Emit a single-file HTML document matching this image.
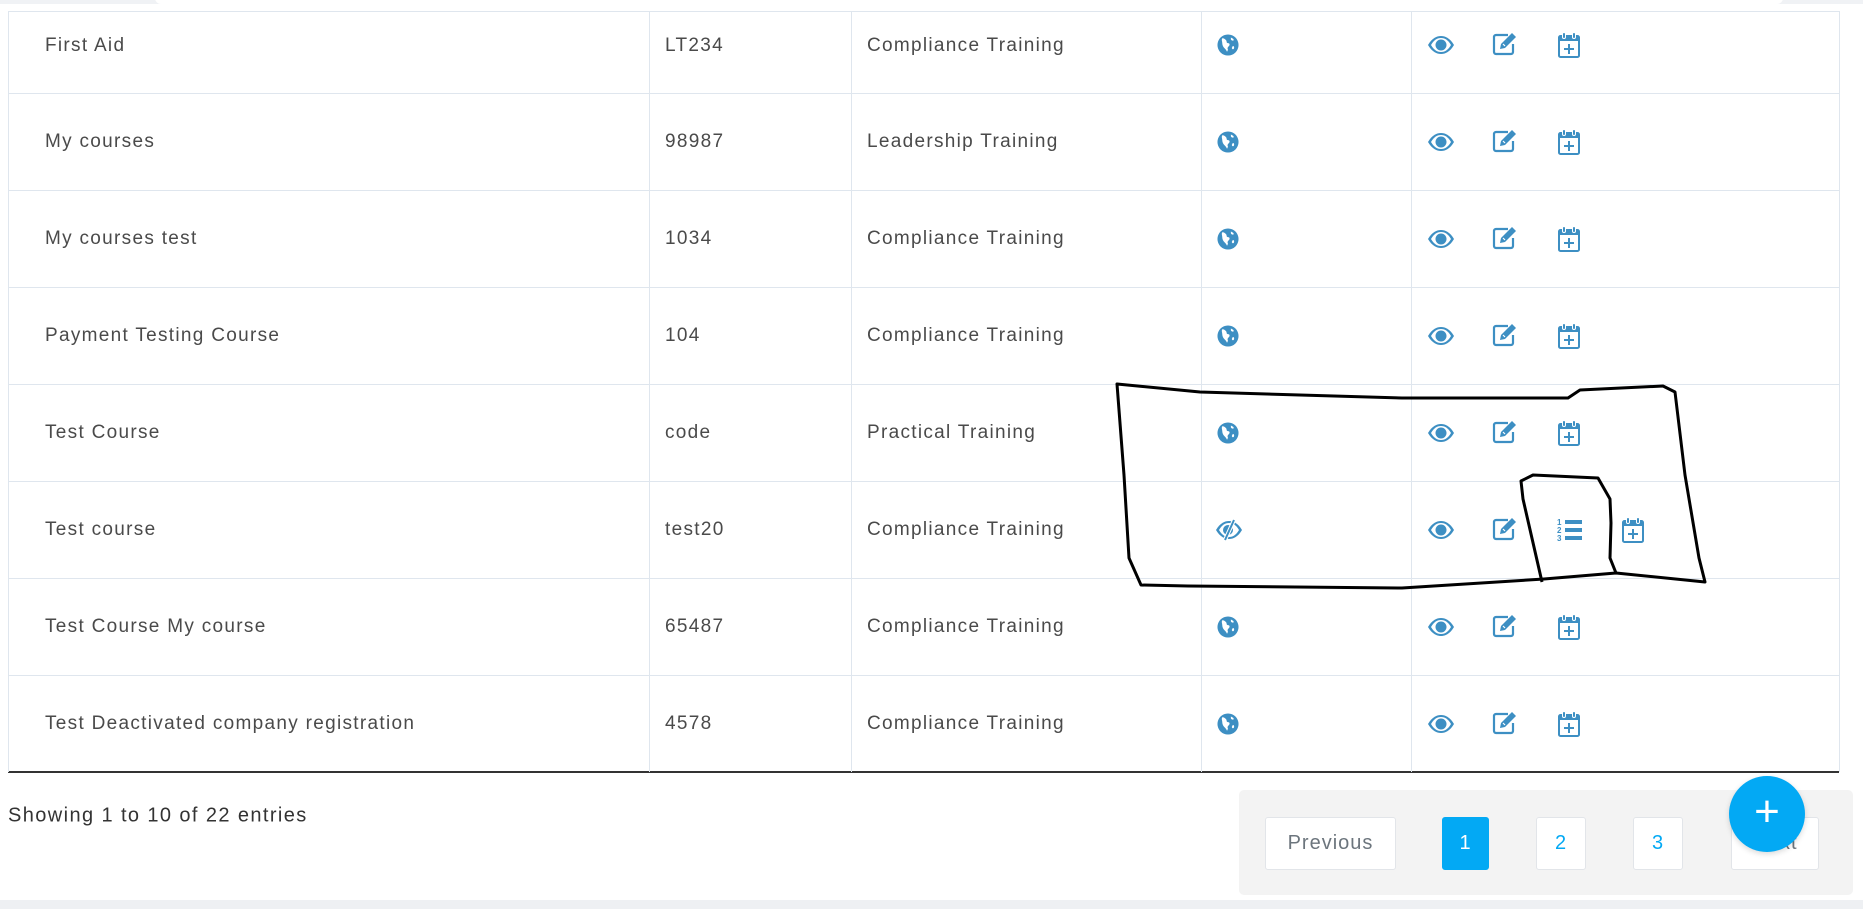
<!DOCTYPE html>
<html><head><meta charset="utf-8"><style>
*{margin:0;padding:0;box-sizing:border-box}
body{width:1863px;height:909px;background:#fff;position:relative;overflow:hidden;font-family:"Liberation Sans",sans-serif;color:#444}
.topband{position:absolute;left:0;top:0;width:1863px;height:4px;background:#f0f2f5}
.topbar{position:absolute;left:155px;top:-8px;width:1628px;height:12px;background:#fff;border-radius:8px}
.t{position:absolute;font-size:19px;color:#4a4a4a;letter-spacing:1.3px;white-space:nowrap;transform:translateY(-50%)}
.hl{position:absolute;left:8px;width:1831px;height:1px;background:#dfe6ee}
.vl{position:absolute;top:11px;height:761px;width:1px;background:#dfe6ee}
.ic{position:absolute;transform:translate(-50%,-50%)}
.pg{position:absolute;left:1239px;top:790px;width:614px;height:105px;background:#f3f3f3;border-radius:5px}
.b{position:absolute;top:817px;height:53px;background:#fff;border:1px solid #e2e5e9;border-radius:3px;font-size:20px;letter-spacing:1px;color:#03a9f4;display:flex;align-items:center;justify-content:center}
</style></head><body>
<div class="topband"></div><div class="topbar"></div>
<div class="hl" style="top:11px"></div>
<div class="hl" style="top:93px"></div>
<div class="hl" style="top:190px"></div>
<div class="hl" style="top:287px"></div>
<div class="hl" style="top:384px"></div>
<div class="hl" style="top:481px"></div>
<div class="hl" style="top:578px"></div>
<div class="hl" style="top:675px"></div>
<div class="hl" style="top:771px;height:2px;background:#333"></div>
<div class="vl" style="left:8px"></div>
<div class="vl" style="left:649px"></div>
<div class="vl" style="left:851px"></div>
<div class="vl" style="left:1201px"></div>
<div class="vl" style="left:1411px"></div>
<div class="vl" style="left:1839px"></div>

<svg width="0" height="0" style="position:absolute"><defs>
<symbol id="globe" viewBox="0 0 24 24"><circle cx="12" cy="12" r="11" fill="#3d8fc3"/><path d="M6 5c2 0 3 1 4 2s0 3 2 3 2 2 1 3-2 2-1 4l-1 2c-1-2-2-3-3-4-1-1-2-3-2-5 0-2-1-3 0-5zM15 4c1 1 3 1 3 3-1 1-3 0-3-1zM17 13c1 0 2 1 1 3-1 1-2 0-2-1z" fill="#fff"/></symbol>
<symbol id="eye" viewBox="0 0 28 20"><path d="M1 10C5 3 10 1 14 1s9 2 13 9c-4 7-9 9-13 9S5 17 1 10z" fill="#3d8fc3"/><path d="M4 10c3-5 6-7 10-7s7 2 10 7c-3 5-6 7-10 7S7 15 4 10z" fill="#fff"/><circle cx="14" cy="10" r="5.5" fill="#3d8fc3"/></symbol>
<symbol id="edit" viewBox="0 0 26 24"><path d="M16 3H4a2 2 0 0 0-2 2v15a2 2 0 0 0 2 2h15a2 2 0 0 0 2-2V12" fill="none" stroke="#3d8fc3" stroke-width="2.2"/><path d="M20 1l4 4-11 11-5 1 1-5z" fill="#3d8fc3"/><path d="M11 12l2 2" stroke="#fff" stroke-width="1.2"/></symbol>
<symbol id="cal" viewBox="0 0 24 26"><rect x="2" y="4" width="20" height="21" rx="1.5" fill="none" stroke="#3d8fc3" stroke-width="2"/><rect x="2" y="4" width="20" height="5" fill="#3d8fc3"/><rect x="5.5" y="0.5" width="3" height="6" rx="1.4" fill="#3d8fc3" stroke="#fff" stroke-width="1"/><rect x="15.5" y="0.5" width="3" height="6" rx="1.4" fill="#3d8fc3" stroke="#fff" stroke-width="1"/><path d="M12 12v10M7 17h10" stroke="#3d8fc3" stroke-width="2"/></symbol>
<symbol id="list" viewBox="0 0 26 26"><text x="0" y="8" font-size="8" font-weight="bold" fill="#3d8fc3" font-family="Liberation Sans">1</text><text x="0" y="16" font-size="8" font-weight="bold" fill="#3d8fc3" font-family="Liberation Sans">2</text><text x="0" y="24" font-size="8" font-weight="bold" fill="#3d8fc3" font-family="Liberation Sans">3</text><rect x="8" y="3" width="17" height="4" fill="#3d8fc3"/><rect x="8" y="11" width="17" height="4" fill="#3d8fc3"/><rect x="8" y="19" width="17" height="4" fill="#3d8fc3"/></symbol>
<symbol id="eyeslash" viewBox="0 0 28 22"><path d="M1 11C5 4 10 2 14 2s9 2 13 9c-4 7-9 9-13 9S5 18 1 11z" fill="#3d8fc3"/><path d="M4 11c3-5 6-7 10-7s7 2 10 7c-3 5-6 7-10 7S7 16 4 11z" fill="#fff"/><circle cx="13" cy="11" r="5" fill="#3d8fc3"/><path d="M19 1L10 21" stroke="#fff" stroke-width="4"/><path d="M19 1L10 21" stroke="#3d8fc3" stroke-width="2"/></symbol>
</defs></svg>

<div class="t" style="left:45px;top:46px">First Aid</div><div class="t" style="left:665px;top:46px">LT234</div><div class="t" style="left:867px;top:46px">Compliance Training</div>
<div class="t" style="left:45px;top:142px">My courses</div><div class="t" style="left:665px;top:142px">98987</div><div class="t" style="left:867px;top:142px">Leadership Training</div>
<div class="t" style="left:45px;top:239px">My courses test</div><div class="t" style="left:665px;top:239px">1034</div><div class="t" style="left:867px;top:239px">Compliance Training</div>
<div class="t" style="left:45px;top:336px">Payment Testing Course</div><div class="t" style="left:665px;top:336px">104</div><div class="t" style="left:867px;top:336px">Compliance Training</div>
<div class="t" style="left:45px;top:433px">Test Course</div><div class="t" style="left:665px;top:433px">code</div><div class="t" style="left:867px;top:433px">Practical Training</div>
<div class="t" style="left:45px;top:530px">Test course</div><div class="t" style="left:665px;top:530px">test20</div><div class="t" style="left:867px;top:530px">Compliance Training</div>
<div class="t" style="left:45px;top:627px">Test Course My course</div><div class="t" style="left:665px;top:627px">65487</div><div class="t" style="left:867px;top:627px">Compliance Training</div>
<div class="t" style="left:45px;top:724px">Test Deactivated company registration</div><div class="t" style="left:665px;top:724px">4578</div><div class="t" style="left:867px;top:724px">Compliance Training</div>

<svg class="ic" style="left:1228px;top:45px" width="23" height="23"><use href="#globe"/></svg>
<svg class="ic" style="left:1228px;top:142px" width="23" height="23"><use href="#globe"/></svg>
<svg class="ic" style="left:1228px;top:239px" width="23" height="23"><use href="#globe"/></svg>
<svg class="ic" style="left:1228px;top:336px" width="23" height="23"><use href="#globe"/></svg>
<svg class="ic" style="left:1228px;top:433px" width="23" height="23"><use href="#globe"/></svg>
<svg class="ic" style="left:1229px;top:530px" width="28" height="22"><use href="#eyeslash"/></svg>
<svg class="ic" style="left:1228px;top:627px" width="23" height="23"><use href="#globe"/></svg>
<svg class="ic" style="left:1228px;top:724px" width="23" height="23"><use href="#globe"/></svg>

<svg class="ic" style="left:1441px;top:45px" width="28" height="20"><use href="#eye"/></svg>
<svg class="ic" style="left:1441px;top:142px" width="28" height="20"><use href="#eye"/></svg>
<svg class="ic" style="left:1441px;top:239px" width="28" height="20"><use href="#eye"/></svg>
<svg class="ic" style="left:1441px;top:336px" width="28" height="20"><use href="#eye"/></svg>
<svg class="ic" style="left:1441px;top:433px" width="28" height="20"><use href="#eye"/></svg>
<svg class="ic" style="left:1441px;top:530px" width="28" height="20"><use href="#eye"/></svg>
<svg class="ic" style="left:1441px;top:627px" width="28" height="20"><use href="#eye"/></svg>
<svg class="ic" style="left:1441px;top:724px" width="28" height="20"><use href="#eye"/></svg>

<svg class="ic" style="left:1505px;top:44px" width="26" height="24"><use href="#edit"/></svg>
<svg class="ic" style="left:1505px;top:141px" width="26" height="24"><use href="#edit"/></svg>
<svg class="ic" style="left:1505px;top:238px" width="26" height="24"><use href="#edit"/></svg>
<svg class="ic" style="left:1505px;top:335px" width="26" height="24"><use href="#edit"/></svg>
<svg class="ic" style="left:1505px;top:432px" width="26" height="24"><use href="#edit"/></svg>
<svg class="ic" style="left:1505px;top:529px" width="26" height="24"><use href="#edit"/></svg>
<svg class="ic" style="left:1505px;top:626px" width="26" height="24"><use href="#edit"/></svg>
<svg class="ic" style="left:1505px;top:723px" width="26" height="24"><use href="#edit"/></svg>

<svg class="ic" style="left:1569px;top:45px" width="24" height="26"><use href="#cal"/></svg>
<svg class="ic" style="left:1569px;top:142px" width="24" height="26"><use href="#cal"/></svg>
<svg class="ic" style="left:1569px;top:239px" width="24" height="26"><use href="#cal"/></svg>
<svg class="ic" style="left:1569px;top:336px" width="24" height="26"><use href="#cal"/></svg>
<svg class="ic" style="left:1569px;top:433px" width="24" height="26"><use href="#cal"/></svg>
<svg class="ic" style="left:1570px;top:530px" width="26" height="26"><use href="#list"/></svg>
<svg class="ic" style="left:1633px;top:530px" width="24" height="26"><use href="#cal"/></svg>
<svg class="ic" style="left:1569px;top:627px" width="24" height="26"><use href="#cal"/></svg>
<svg class="ic" style="left:1569px;top:724px" width="24" height="26"><use href="#cal"/></svg>

<svg style="position:absolute;left:0;top:0" width="1863" height="909">
<path d="M1117 384 L1200 392 L1402 398 L1568 398 L1580 390 L1663 386 L1675 392 L1685 475 L1699 558 L1705 582 L1616 573 L1544 579 L1402 588 L1188 586 L1141 585 L1129 558 L1124 475 Z" fill="none" stroke="#000" stroke-width="3" stroke-linejoin="round"/>
<path d="M1542 582 L1523 499 L1521 481 L1533 475 L1598 478 L1610 499 L1611 523 L1610 558 L1616 573" fill="none" stroke="#000" stroke-width="3" stroke-linejoin="round"/>
</svg>

<div class="t" style="left:8px;top:816px;font-size:20px;letter-spacing:1.4px;color:#333">Showing 1 to 10 of 22 entries</div>
<div class="pg"></div>
<div class="b" style="left:1265px;width:131px;color:#6c757d">Previous</div>
<div class="b" style="left:1442px;width:47px;background:#03a9f4;border-color:#03a9f4;color:#fff">1</div>
<div class="b" style="left:1536px;width:50px">2</div>
<div class="b" style="left:1633px;width:50px">3</div>
<div class="b" style="left:1731px;width:88px;color:#6c757d">Next</div>
<div style="position:absolute;left:1729px;top:776px;width:76px;height:76px;border-radius:50%;background:#03a9f4;color:#fff;font-size:44px;line-height:72px;text-align:center;box-shadow:0 2px 6px rgba(0,0,0,.15)">+</div>
<div style="position:absolute;left:0;top:900px;width:1863px;height:9px;background:#eef0f3"></div>
</body></html>
